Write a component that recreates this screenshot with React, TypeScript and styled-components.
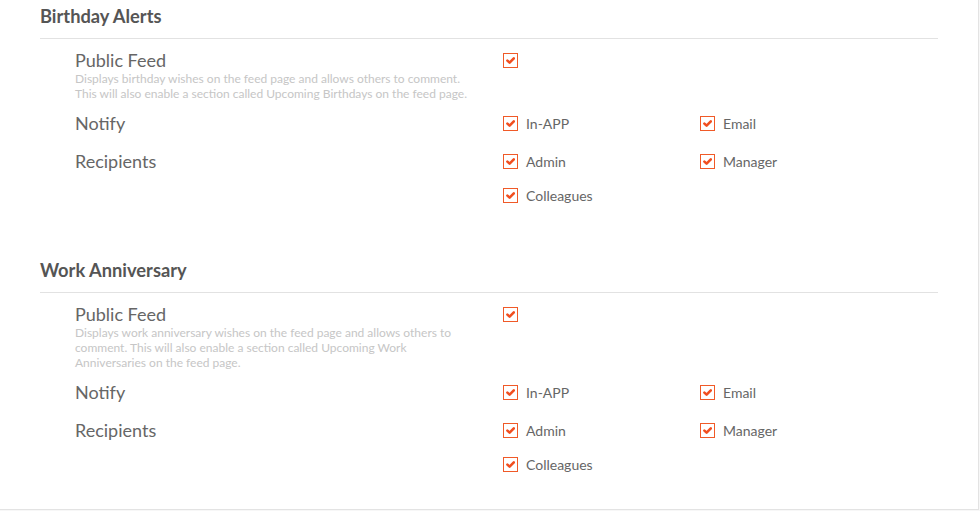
import React from "react";
import styled, { createGlobalStyle } from "styled-components";

const GlobalStyle = createGlobalStyle`
  html, body {
    margin: 0;
    padding: 0;
    background: #f7f7f7;
    font-family: Lato, "Open Sans", sans-serif;
  }
`;

interface IOption {
  label?: string;
  checked: boolean;
}

interface ISetting {
  title: string;
  description?: string;
  options: IOption[];
}

interface ISection {
  heading: string;
  settings: ISetting[];
}

const recipients: IOption[] = [
  { label: "Admin", checked: true },
  { label: "Manager", checked: true },
  { label: "Colleagues", checked: true },
];

const notify: IOption[] = [
  { label: "In-APP", checked: true },
  { label: "Email", checked: true },
];

const sections: ISection[] = [
  {
    heading: "Birthday Alerts",
    settings: [
      {
        title: "Public Feed",
        description:
          "Displays birthday wishes on the feed page and allows others to comment. This will also enable a section called Upcoming Birthdays on the feed page.",
        options: [{ checked: true }],
      },
      { title: "Notify", options: notify },
      { title: "Recipients", options: recipients },
    ],
  },
  {
    heading: "Work Anniversary",
    settings: [
      {
        title: "Public Feed",
        description:
          "Displays work anniversary wishes on the feed page and allows others to comment. This will also enable a section called Upcoming Work Anniversaries on the feed page.",
        options: [{ checked: true }],
      },
      { title: "Notify", options: notify },
      { title: "Recipients", options: recipients },
    ],
  },
];

const CheckMark = () => (
  <svg width="9" height="7" viewBox="0 0 9 7">
    <path
      d="M1.4 3.6 L3.6 5.6 L7.8 1.4"
      fill="none"
      stroke="#f14e1f"
      strokeWidth="2.6"
      strokeLinecap="round"
      strokeLinejoin="round"
    />
  </svg>
);

const Option = ({ label, checked }: IOption) => (
  <OptionItem>
    <Box>{checked && <CheckMark />}</Box>
    {label && <span className="option-label">{label}</span>}
  </OptionItem>
);

const App = () => {
  return (
    <>
      <GlobalStyle />
      <Card>
        {sections.map((section) => (
          <Section key={section.heading}>
            <Heading>{section.heading}</Heading>
            <Rows>
              {section.settings.map((setting) => (
                <Row key={setting.title}>
                  <div className="setting-info">
                    <h3 className="setting-info_title">{setting.title}</h3>
                    {setting.description && (
                      <p className="setting-info_desc">{setting.description}</p>
                    )}
                  </div>
                  <Options>
                    {setting.options.map((option, i) => (
                      <Option key={i} {...option} />
                    ))}
                  </Options>
                </Row>
              ))}
            </Rows>
          </Section>
        ))}
      </Card>
    </>
  );
};

export default App;

const Card = styled.div`
  width: 979px;
  height: 510px;
  box-sizing: border-box;
  background: #fff;
  border-right: 1px solid #e3e3e3;
  border-bottom: 1px solid #e3e3e3;
  padding: 5px 40px 0 40px;
  display: flex;
  flex-direction: column;
  gap: 48px;
  overflow: hidden;
`;

const Section = styled.section`
  width: 898px;
`;

const Heading = styled.h2`
  margin: 0;
  font-size: 18.3px;
  line-height: 22px;
  font-weight: 700;
  color: #555;
  padding-bottom: 11px;
  border-bottom: 1px solid #e2e2e2;
`;

const Rows = styled.div`
  display: flex;
  flex-direction: column;
  gap: 11px;
  padding: 10px 0 0 35px;
`;

const Row = styled.div`
  display: grid;
  grid-template-columns: 428px 1fr;

  .setting-info {
    width: 395px;
  }

  .setting-info_title {
    margin: 0;
    font-size: 18px;
    line-height: 22px;
    font-weight: 400;
    color: #666;
  }

  .setting-info_desc {
    margin: 0;
    font-size: 12px;
    line-height: 15px;
    color: #c6c6c6;
  }
`;

const Options = styled.div`
  display: grid;
  grid-template-columns: 197px 197px;
  row-gap: 12px;
  align-content: start;
  padding-bottom: 5px;
`;

const OptionItem = styled.label`
  display: flex;
  align-items: center;
  gap: 8px;
  height: 22px;
  font-size: 14px;
  color: #666;
  cursor: pointer;

  .option-label {
    padding-top: 1px;
  }
`;

const Box = styled.span`
  width: 15px;
  height: 15px;
  box-sizing: border-box;
  border: 1px solid #f05a28;
  display: flex;
  align-items: center;
  justify-content: center;
  padding-top: 1px;
  flex-shrink: 0;
`;
